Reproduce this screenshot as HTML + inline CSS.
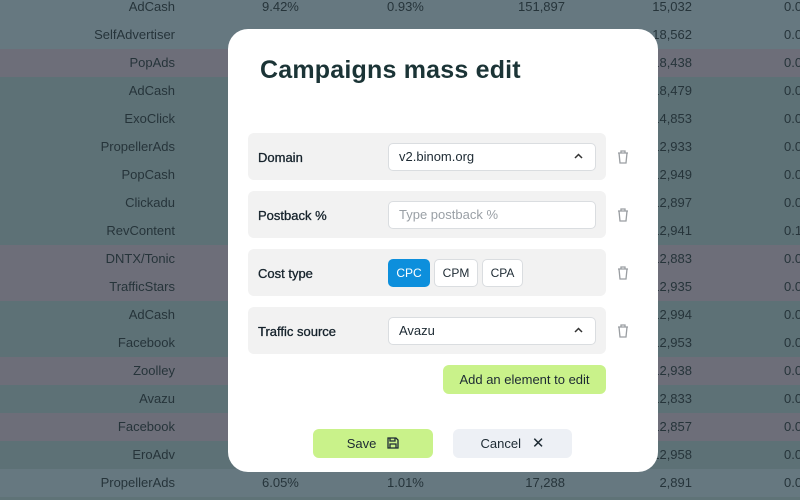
<!DOCTYPE html>
<html><head><style>
*{box-sizing:border-box;margin:0;padding:0}
body{width:800px;height:500px;overflow:hidden;position:relative;font-family:"Liberation Sans",sans-serif;background:#5f7377}
.r{position:absolute;left:0;width:800px;height:28px;font-size:13px;color:#26343a;line-height:28px}
.r span{position:absolute}
.n{right:625px;text-align:right}
.c2{left:262px}.c3{left:387px}.c4{right:235px}.c5{right:108px}.c6{left:784px}
.modal{position:absolute;left:228px;top:29px;width:430px;height:443px;background:#fff;border-radius:20px}
h1{position:absolute;left:32px;top:27px;font-size:25px;font-weight:bold;color:#1b3436;letter-spacing:.2px}
.row{position:absolute;left:20px;width:358px;height:47px;background:#f2f2f2;border-radius:6px}
.lbl{position:absolute;left:10px;top:1px;line-height:47px;font-size:13px;color:#16232c;-webkit-text-stroke:.3px #16232c}
.inp{position:absolute;left:140px;top:10px;width:208px;height:28px;background:#fff;border:1px solid #dadde0;border-radius:5px;font-size:13px;line-height:26px;padding-left:10px;color:#1d2a33}
.inp.ph{color:#9aa0a6}
.car{position:absolute;right:12px;top:9px;width:9px;height:6px}
.tr{position:absolute;left:388px;width:14px;height:16px}
.b{position:absolute;top:10px;height:28px;border:1px solid #dadde0;border-radius:5px;background:#fff;font-size:12px;line-height:26px;text-align:center;color:#1d2a33}
.btn{position:absolute;height:29px;border-radius:6px;font-size:13px;line-height:29px;text-align:center;color:#1d2a33}
</style></head><body>
<div id="bg"></div>
<script>
var n=["AdCash","SelfAdvertiser","PopAds","AdCash","ExoClick","PropellerAds","PopCash","Clickadu","RevContent","DNTX/Tonic","TrafficStars","AdCash","Facebook","Zoolley","Avazu","Facebook","EroAdv","PropellerAds"];
var c5=["15,032","18,562","18,438","18,479","14,853","12,933","12,949","12,897","12,941","12,883","12,935","12,994","12,953","12,938","12,833","12,857","12,958","2,891"];
var cl={g:"#667880",p:"#6d6e79",t:"#5d7176"};
var pat=["g","g","p","t","t","t","t","t","t","p","p","t","t","p","t","p","t","g"];
var h="";
for(var i=0;i<18;i++){h+='<div class="r" style="top:'+(-7+28*i)+'px;background:'+cl[pat[i]]+'"><span class="n">'+n[i]+'</span>'+(i==0||i==17?'<span class="c2">'+(i?"6.05%":"9.42%")+'</span><span class="c3">'+(i?"1.01%":"0.93%")+'</span><span class="c4">'+(i?"17,288":"151,897")+'</span>':'')+'<span class="c5">'+c5[i]+'</span><span class="c6">'+(i==8?"0.1":"0.0")+'</span></div>';}
document.getElementById("bg").innerHTML=h;
</script>
<div class="modal">
<h1>Campaigns mass edit</h1>
<div class="row" style="top:104px"><div class="lbl">Domain</div><div class="inp">v2.binom.org<svg class="car" viewBox="0 0 9 6" fill="none" stroke="#333" stroke-width="1.5"><path d="M1 5l3.5-3.5L8 5"/></svg></div></div>
<div class="row" style="top:162px"><div class="lbl">Postback %</div><div class="inp ph">Type postback %</div></div>
<div class="row" style="top:220px"><div class="lbl">Cost type</div>
<div class="b" style="left:140px;width:42px;background:#0d8fdc;border-color:#0d8fdc;color:#fff">CPC</div>
<div class="b" style="left:186px;width:44px">CPM</div>
<div class="b" style="left:234px;width:41px">CPA</div></div>
<div class="row" style="top:278px"><div class="lbl">Traffic source</div><div class="inp">Avazu<svg class="car" viewBox="0 0 9 6" fill="none" stroke="#333" stroke-width="1.5"><path d="M1 5l3.5-3.5L8 5"/></svg></div></div>
<svg class="tr" style="top:120px" viewBox="0 0 14 16" fill="none" stroke="#9a9ea2" stroke-width="1.3"><path d="M2 4h10M5 4V2h4v2M3 4l1 10h6l1-10"/></svg>
<svg class="tr" style="top:178px" viewBox="0 0 14 16" fill="none" stroke="#9a9ea2" stroke-width="1.3"><path d="M2 4h10M5 4V2h4v2M3 4l1 10h6l1-10"/></svg>
<svg class="tr" style="top:236px" viewBox="0 0 14 16" fill="none" stroke="#9a9ea2" stroke-width="1.3"><path d="M2 4h10M5 4V2h4v2M3 4l1 10h6l1-10"/></svg>
<svg class="tr" style="top:294px" viewBox="0 0 14 16" fill="none" stroke="#9a9ea2" stroke-width="1.3"><path d="M2 4h10M5 4V2h4v2M3 4l1 10h6l1-10"/></svg>
<div class="btn" style="left:215px;top:336px;width:163px;background:#c9f28a">Add an element to edit</div>
<div class="btn" style="left:85px;top:400px;width:120px;background:#c9f28a">Save&nbsp;&nbsp;&nbsp;<svg width="12" height="12" viewBox="0 0 12 12" fill="none" stroke="#1d2a33" stroke-width="1.3" style="vertical-align:-1px"><path d="M1 1h8l2 2v8H1zM3 1v3h5V1M3 11V7h6v4"/></svg></div>
<div class="btn" style="left:225px;top:400px;width:119px;background:#edf0f5">Cancel&nbsp;&nbsp;&nbsp;<span style="font-size:15px">&#10005;</span></div>
</div>
</body></html>
